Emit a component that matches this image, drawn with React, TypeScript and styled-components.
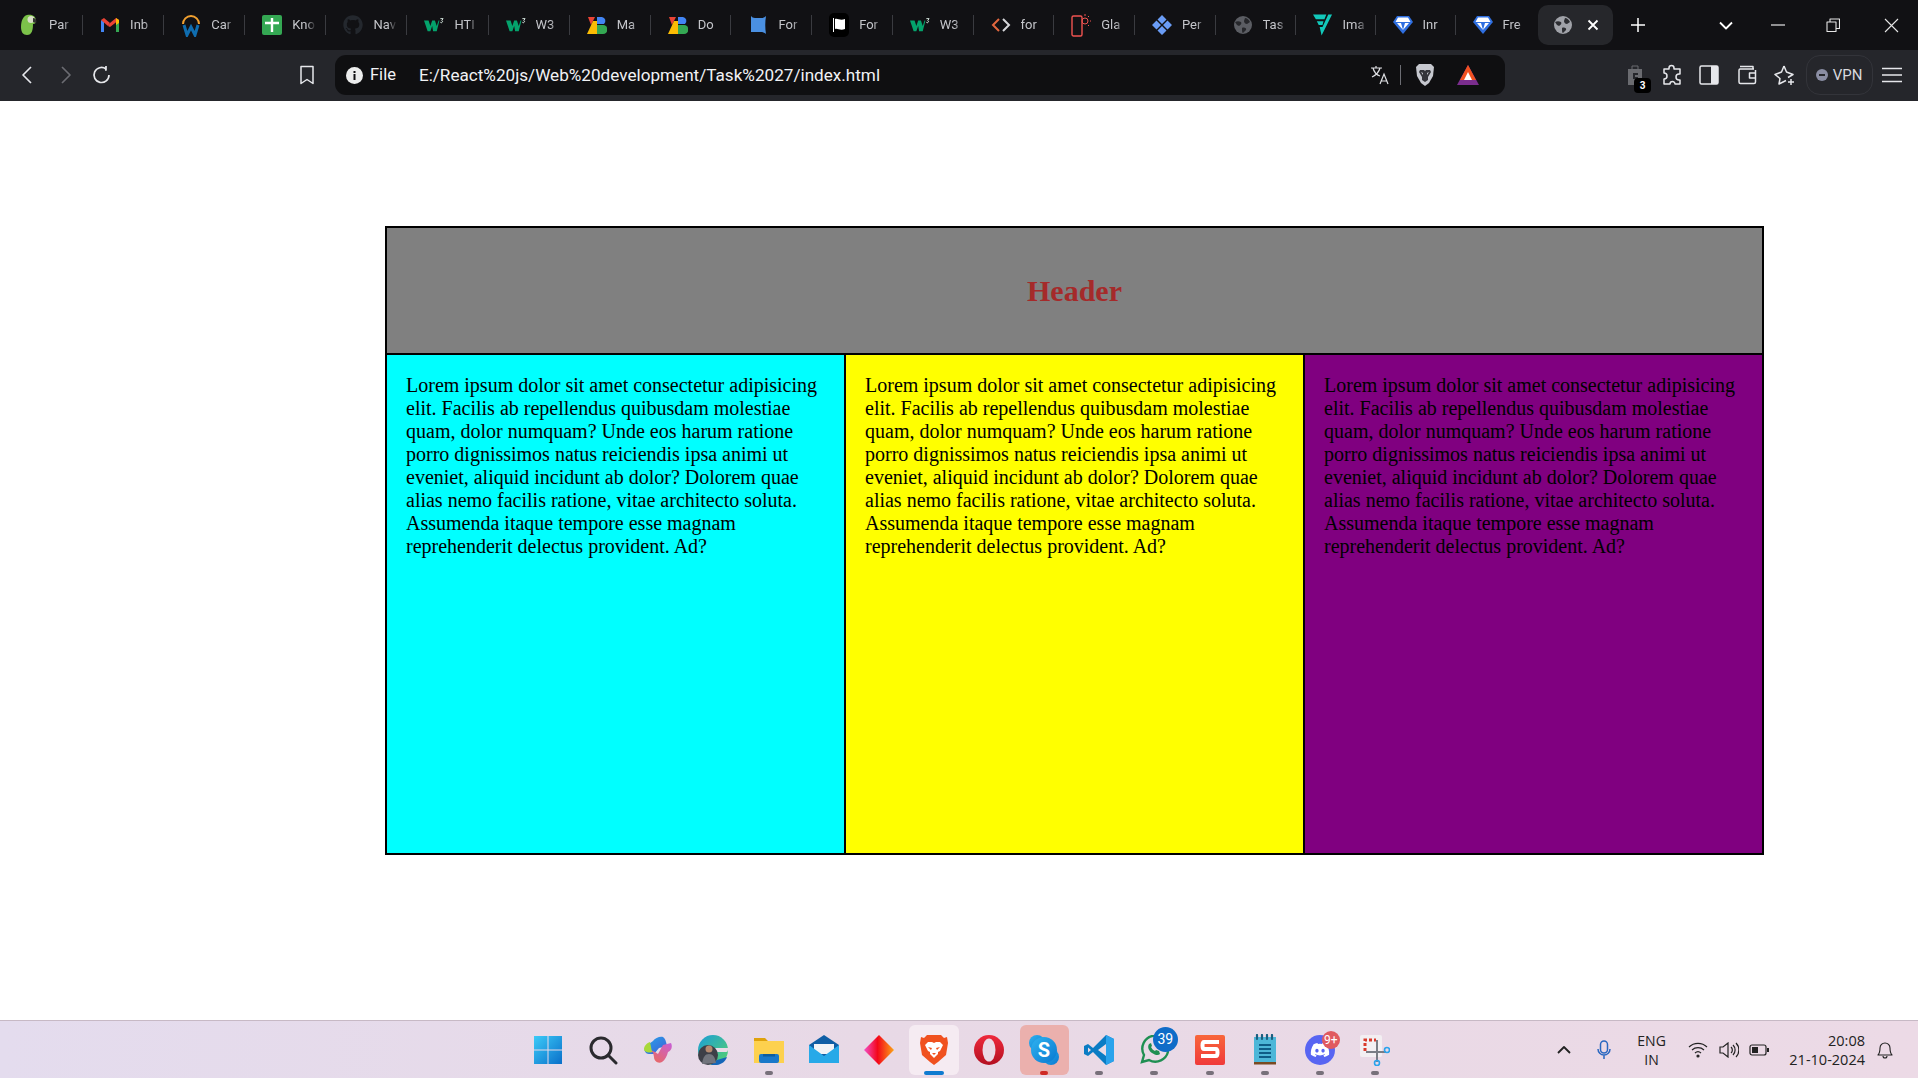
import React from "react";
import styled, { createGlobalStyle } from "styled-components";
import { FaGithub, FaDiscord } from "react-icons/fa";

const Global = createGlobalStyle`
  html, body { margin: 0; padding: 0; background: #fff; }
  body { width: 1918px; height: 1078px; overflow: hidden; font-family: "Liberation Serif", serif; }
`;

const Screen = styled.div`
  width: 1918px; height: 1078px; display: flex; flex-direction: column;
`;
const TabBar = styled.div`
  height: 50px; background: #111114; display: flex; align-items: center; padding-left: 2px; flex-shrink: 0;
`;
const Tab = styled.div<{ $w: number }>`
  width: ${(p) => p.$w}px; height: 20px; box-sizing: border-box; padding-left: 18px; display: flex; align-items: center; gap: 11px;
  border-right: 1px solid #3a3b40; flex-shrink: 0;
  &:nth-child(19) { border-right: none; }
`;
const FavSlot = styled.span`
  width: 20px; height: 20px; display: flex; align-items: center; justify-content: center; flex-shrink: 0; margin-left: -1px; margin-right: -1px;
`;
const TabLabel = styled.span`
  width: 24px; overflow: hidden; white-space: nowrap; color: #c4c5ca; font: 13px/20px Roboto, sans-serif;
  -webkit-mask-image: linear-gradient(90deg, #000 60%, transparent 100%);
  mask-image: linear-gradient(90deg, #000 60%, transparent 100%);
`;
const ActiveTab = styled.div`
  width: 75px; height: 40px; margin-left: 2.3px; background: #26272b; border-radius: 10px; display: flex; align-items: center;
  justify-content: space-between; padding: 0 14px 0 16px; box-sizing: border-box; flex-shrink: 0;
`;
const NewTab = styled.span`
  margin-left: 18px; display: flex;
`;
const WindowControls = styled.div`
  margin-left: auto; display: flex; align-items: center; padding-right: 19.5px;
`;
const ControlSlot = styled.span<{ $ml: number }>`
  margin-left: ${(p) => p.$ml}px; display: flex;
`;
const ToolBar = styled.div`
  height: 51px; background: #25262b; display: flex; align-items: center; flex-shrink: 0; padding-bottom: 1px; box-sizing: border-box; position: relative;
`;
const NavGroup = styled.div`
  display: flex; align-items: center; width: 335px; padding-left: 18px; box-sizing: border-box; gap: 17px;
`;
const NavSpacer = styled.span`
  margin-left: auto; margin-right: 20px; display: flex;
`;
const AddressBar = styled.div`
  width: 1170px; height: 40px; background: #0f0f11; border-radius: 11px; display: flex; align-items: center; box-sizing: border-box; padding: 0 26px 0 11px;
`;
const FileChip = styled.span`
  color: #f1f2f5; font: 16.5px/20px Roboto, sans-serif; margin-left: 7px; margin-right: 23px;
`;
const Url = styled.span`
  color: #f1f2f5; font: 17.14px/20px Roboto, sans-serif; white-space: nowrap; flex: 1;
`;
const Divider = styled.span`
  width: 1px; height: 20px; background: #6c6d73; margin: 0 14px 0 10px;
`;
const AddrIcons = styled.div`
  display: flex; align-items: center;
`;
const BatSlot = styled.span`
  margin-left: 22px; display: flex;
`;
const ToolRight = styled.div`
  margin-left: auto; display: flex; align-items: center; padding-right: 16px; gap: 9.5px;
`;
const ExtGroup = styled.div`
  display: flex; align-items: center; gap: 17.5px;
`;
const ExtSlot = styled.span`
  position: relative; display: flex; margin-right: 1px;
`;
const ExtBadge = styled.span`
  position: absolute; right: -8px; bottom: -7px; width: 17px; height: 15px; border-radius: 4px; background: #000; color: #fff;
  font: 700 10px/15px Roboto, sans-serif; text-align: center;
`;
const VpnPill = styled.div`
  width: 67px; height: 40px; box-sizing: border-box; border: 1px solid #33343a; border-radius: 14px; display: flex; align-items: center; justify-content: center; gap: 5px;
  color: #d8d9de; font: 15px/20px Roboto, sans-serif;
`;
const VpnDot = styled.span`
  width: 12px; height: 12px; border-radius: 50%; background: #8a8da3; display: flex; align-items: center; justify-content: center;
  &::after { content: ""; width: 6px; height: 2px; background: #25262b; }
`;
const Main = styled.main`
  flex: 1; background: #fff; padding: 125px 154px 0 385px; box-sizing: border-box; min-height: 0;
`;
const PageGrid = styled.section`
  height: 629px; box-sizing: border-box; border: 2px solid #000; background: #000; display: grid;
  grid-template-columns: repeat(3, 1fr); grid-template-rows: 125px 1fr; gap: 2px;
`;
const PageHeader = styled.header`
  grid-column: 1 / -1; background: gray; display: flex; align-items: center; justify-content: center;
`;
const Title = styled.h1`
  margin: 0; color: brown; font: 700 30px/34px "Liberation Serif", serif;
`;
const Column = styled.article<{ $bg: string }>`
  background: ${(p) => p.$bg}; padding: 19px; box-sizing: border-box;
`;
const Copy = styled.p`
  margin: 0; color: #000; font: 20px/23px "Liberation Serif", serif;
`;
const Taskbar = styled.footer`
  height: 58px; box-sizing: border-box; border-top: 1px solid #c7b9c5; flex-shrink: 0; padding-left: 5px;
  background: linear-gradient(90deg, #e4dcee 0%, #e8d9e6 45%, #ecdae6 100%);
  display: grid; grid-template-columns: 1fr auto 1fr; align-items: center;
`;
const TaskCenter = styled.div`
  grid-column: 2; display: flex; align-items: center; height: 100%;
`;
const TaskItem = styled.div<{ $bg?: string }>`
  width: 55.13px; height: 50px; display: flex; align-items: center; justify-content: center; position: relative; flex-shrink: 0;
  &::before {
    content: ""; position: absolute; top: 0; bottom: 0; left: 3px; right: 3px; border-radius: 6px; background: ${(p) => p.$bg || "transparent"};
  }
  & > svg { position: relative; }
`;
const TaskDot = styled.span<{ $color: string; $w: number }>`
  position: absolute; bottom: 0; left: 50%; margin-left: ${(p) => -p.$w / 2}px; width: ${(p) => p.$w}px; height: 4px; border-radius: 2px; background: ${(p) => p.$color};
`;
const CountBadge = styled.span<{ $bg: string; $size: number; $font: number }>`
  position: absolute; top: ${(p) => 15 - p.$size / 2}px; left: ${(p) => 38.5 - p.$size / 2}px; width: ${(p) => p.$size}px; height: ${(p) => p.$size}px;
  border-radius: 50%; background: ${(p) => p.$bg}; color: #fff;
  font: ${(p) => p.$font}px/${(p) => p.$size}px Roboto, sans-serif; text-align: center;
`;
const Tray = styled.div`
  grid-column: 3; justify-self: end; display: flex; align-items: center; height: 100%; padding-right: 25px; color: #222;
`;
const TraySlot = styled.span<{ $ml: number }>`
  margin-left: ${(p) => p.$ml}px; display: flex;
`;
const TrayText = styled.div<{ $align: string; $ml: number; $size: number }>`
  margin-left: ${(p) => p.$ml}px; text-align: ${(p) => p.$align}; font: ${(p) => p.$size}px/19px "Open Sans", sans-serif; color: #222;
`;

/* ---- favicons ---- */
const Parrot = () => (
  <svg width="18" height="22" viewBox="0 0 18 22"><path d="M7 1c5-1 9 1 9 6 0 2-1 3-3 3 0 6-1 11-6 11-4 0-6-3-6-8C1 7 3 2 7 1z" fill="#7cc24a" /><circle cx="11" cy="5.500" r="3.500" fill="#d9dfc8" /><path d="M13 4c3 0 4 3 3 5l-3-1z" fill="#333" /></svg>
);
const Gmail = () => (
  <svg width="20" height="16" viewBox="0 0 20 16"><path d="M1 15V3l3 2v10z" fill="#4285f4" /><path d="M19 15V3l-3 2v10z" fill="#34a853" /><path d="M1 3 4 1l6 5-2 3z" fill="#ea4335" /><path d="M10 6l6-5 3 2-9 7-2-1z" fill="#ea4335" /><path d="M16 1l3 2v3l-3 2z" fill="#fbbc04" /></svg>
);
const Workday = () => (
  <svg width="20" height="24" viewBox="0 0 20 24"><path d="M2 11a8 8 0 0 1 16 0" fill="none" stroke="#f0a030" strokeWidth="2" /><path d="M3 12l3 10 4-8 4 8 3-10" fill="none" stroke="#0f6db0" strokeWidth="3" /></svg>
);
const PlusSquare = () => (
  <svg width="20" height="20" viewBox="0 0 20 20"><rect width="20" height="20" rx="2" fill="#34a853" /><path d="M10 3v14M3 8h14" stroke="#fff" strokeWidth="2.400" /></svg>
);
const W3 = () => (
  <svg width="22" height="16" viewBox="0 0 22 16"><path d="M0 3h5l2 6 2-6h3l2 6 2-6h1l-3 12h-4L9 9l-2 6H4z" fill="#04a36c" /><path d="M18 1h3l-1.400 2a1.300 1.300 0 1 1-1.600 2" fill="none" stroke="#e7f7ef" strokeWidth="1" /></svg>
);
const SevenB = () => (
  <svg width="20" height="19" viewBox="0 0 20 19"><path d="M1 1h7L4 9z" fill="#ea4335" /><path d="M6 5h4v13H0z" fill="#fbbc04" /><path d="M10 1h5a4 4 0 0 1 2 7h-7z" fill="#4285f4" /><path d="M10 9h6a4.500 4.500 0 0 1 0 9h-6z" fill="#34a853" /></svg>
);
const Banner = () => (
  <svg width="17" height="20" viewBox="0 0 17 20"><path d="M1 1c1 1 2 2 4 2h7c1 0 3-1 4-2-1 6-1 12 0 18-1-1-3-2-4-2H1z" fill="#4a90e2" /></svg>
);
const FlagBox = () => (
  <svg width="20" height="24" viewBox="0 0 20 24"><rect width="20" height="24" rx="5" fill="#000" /><path d="M4 5h1v14H4zM6 6c3-1 5 2 10 0v10c-5 2-7-1-10 0z" fill="#fff" /></svg>
);
const Code = () => (
  <svg width="20" height="14" viewBox="0 0 20 14"><path d="M8 1 2 7l6 6" fill="none" stroke="#e2673f" strokeWidth="2" /><path d="m12 1 6 6-6 6" fill="none" stroke="#d6d7da" strokeWidth="2" /></svg>
);
const Phone = () => (
  <svg width="20" height="24" viewBox="0 0 20 24"><rect x="1" y="3" width="10" height="20" rx="1.500" fill="none" stroke="#ef5350" strokeWidth="1.400" /><circle cx="14" cy="8" r="3" fill="none" stroke="#ef5350" /><path d="M14 1v2M19 8h1M18 3l-1 1M18 13l-1-1" stroke="#ef5350" /></svg>
);
const Diamonds = () => (
  <svg width="20" height="20" viewBox="0 0 20 20" fill="#6a9cf5"><path d="m10 0 4.500 4.500L10 9 5.500 4.500zM4.500 5.500 9 10l-4.500 4.500L0 10zM15.500 5.500 20 10l-4.500 4.500L11 10zM10 11l4.500 4.500L10 20l-4.500-4.500z" /></svg>
);
const Globe = ({ c = "#5b5d63", d = "#26272b", s = 18 }: { c?: string; d?: string; s?: number }) => (
  <svg width={s} height={s} viewBox="0 0 18 18"><circle cx="9" cy="9" r="9" fill={c} /><path d="M1 6c2-1 4-1 6 0 1 1 0 3-2 4L3 9zM11 2c2 0 4 2 5 4l-3 2c-2 0-3-2-3-3zM8 12c2-1 5 0 4 2l-3 3c-1 0-1-3-1-5z" fill={d} /></svg>
);
const FV = () => (
  <svg width="21" height="24" viewBox="0 0 21 24"><path d="M0 1h14l-2 5H3zM4 8h7l-1 4H6zM7 14l2 9L20 1h-4l-6 13z" fill="#12c9bb" /></svg>
);
const Gem = () => (
  <svg width="20" height="18" viewBox="0 0 20 18"><path d="M4 0h12l4 6-10 12L0 6z" fill="#2f6fe0" /><path d="M5 1.500h10L17.500 6H2.500zM4 7h4l2 7zM16 7h-4l-2 7z" fill="#fff" /></svg>
);

const tabs: [React.ReactNode, string][] = [
  [<Parrot />, "Par"], [<Gmail />, "Inb"], [<Workday />, "Car"], [<PlusSquare />, "Kno"],
  [<FaGithub size={20} color="#24282e" />, "Nav"], [<W3 />, "HTI"], [<W3 />, "W3"], [<SevenB />, "Ma"],
  [<SevenB />, "Do"], [<Banner />, "For"], [<FlagBox />, "For"], [<W3 />, "W3"], [<Code />, "for"],
  [<Phone />, "Gla"], [<Diamonds />, "Per"], [<Globe />, "Tas"], [<FV />, "Ima"], [<Gem />, "Inr"], [<Gem />, "Fre"],
];
const tabWidth = (i: number) => (i < 8 ? 81.1 : i < 15 ? 80.7 : 80);

/* ---- chrome glyphs ---- */
const Stroke = ({ w = 18, h = 18, c = "#e4e5e9", sw = 1.5, d }: { w?: number; h?: number; c?: string; sw?: number; d: string }) => (
  <svg width={w} height={h} viewBox={`0 0 ${w} ${h}`} fill="none" stroke={c} strokeWidth={sw} strokeLinejoin="round"><path d={d} /></svg>
);

/* ---- taskbar icons ---- */
const StartIcon = () => (
  <svg width="30" height="30" viewBox="0 0 30 30"><defs><linearGradient id="st" x1="0" y1="0" x2="1" y2="1"><stop offset="0" stopColor="#3ccbf8" /><stop offset="1" stopColor="#0a6fc9" /></linearGradient></defs><path d="M1 1h13.500v13.500H1zM15.500 1H29v13.500H15.500zM1 15.500h13.500V29H1zM15.500 15.500H29V29H15.500z" fill="url(#st)" /></svg>
);
const SearchIcon = () => (
  <svg width="30" height="30" viewBox="0 0 30 30" fill="none" stroke="#2a2a2e" strokeWidth="3"><circle cx="13" cy="13" r="10" /><path d="m20 20 8 8" strokeLinecap="round" /></svg>
);
const CopilotIcon = () => (
  <svg width="30" height="30" viewBox="0 0 30 30"><defs><linearGradient id="c1" x1="0" y1="0" x2="1" y2="1"><stop offset="0" stopColor="#2aa5e8" /><stop offset="1" stopColor="#3b5fd8" /></linearGradient><linearGradient id="c2" x1="0" y1="1" x2="1" y2="0"><stop offset="0" stopColor="#f06a4a" /><stop offset="1" stopColor="#c75fd8" /></linearGradient></defs><path d="M10 6c2-3 7-5 10-4 2 1 3 4 4 9l-8 2-5 6H6C2 19 0 14 3 11z" fill="url(#c1)" /><path d="M3 13c1 4 4 5 7 4l1 5c0 4 4 7 8 5 3-2 5-6 6-10 3-1 5-5 3-9l-8 2-5 9-3-2z" fill="url(#c2)" /><path d="M1 14c0-3 3-6 6-7l2 10c-4 1-8 0-8-3z" fill="#a8d83a" /></svg>
);
const EdgeIcon = () => (
  <svg width="30" height="30" viewBox="0 0 30 30"><defs><linearGradient id="e1" x1="0" y1="0" x2="1" y2="1"><stop offset="0" stopColor="#1a9dd8" /><stop offset="1" stopColor="#58d36a" /></linearGradient></defs><circle cx="15" cy="15" r="15" fill="url(#e1)" /><path d="M14 13h16c0 2 0 4-2 4h-9c-2 0-4-2-5-4z" fill="#e8dbe6" /><path d="M13 30c8 1 14-2 16-8l-10 3c-3 1-5 3-6 5z" fill="#1466b8" /><circle cx="10" cy="20" r="10" fill="#3d3f47" /><circle cx="11" cy="14" r="3.500" fill="#b58a70" /><path d="M4 29c1-7 3-10 7-10s6 3 7 9z" fill="#71747c" /></svg>
);
const ExplorerIcon = () => (
  <svg width="30" height="30" viewBox="0 0 30 30"><path d="M0 3h11l3 3h16v8H0z" fill="#dfa20c" /><path d="M0 6h30v22H0z" fill="#fdd14e" /><rect x="5" y="19" width="20" height="9" rx="2" fill="#1a78c9" /><rect x="9" y="19" width="12" height="2.500" fill="#0f5d9f" /></svg>
);
const MailIcon = () => (
  <svg width="30" height="30" viewBox="0 0 30 30"><path d="M0 10 15 0l15 10v18H0z" fill="#0f5ea5" /><path d="M5 9h20v10H5z" fill="#f1f3f6" /><path d="M0 10l15 11 15-11v18H0z" fill="#27a9e8" /></svg>
);
const DiamondIcon = () => (
  <svg width="30" height="30" viewBox="0 0 30 30"><defs><linearGradient id="d1" x1="0" y1="0" x2="1" y2="0"><stop offset="0" stopColor="#f450c8" /><stop offset=".45" stopColor="#f3071a" /><stop offset="1" stopColor="#fca516" /></linearGradient></defs><path d="M15 0l15 15-15 15L0 15z" fill="url(#d1)" /></svg>
);
const BraveIcon = () => (
  <svg width="28" height="32" viewBox="0 0 28 32"><path d="M7 1h14l3 3 3-1 1 6-2 12-8 7-4 3-4-3-8-7L0 9l1-6 3 1z" fill="#f0511f" /><path d="M8 8h4l2 1 2-1h4l3 3-3 6-2 1v2l-4 4-4-4v-2l-2-1-3-6z" fill="#fff" /><path d="M8 13l4 1-1 2zM20 13l-4 1 1 2zM12 19h4l-2 2z" fill="#f0511f" /></svg>
);
const OperaIcon = () => (
  <svg width="30" height="30" viewBox="0 0 30 30"><defs><linearGradient id="op" x1="0" y1="0" x2="0" y2="1"><stop offset="0" stopColor="#ef2a3c" /><stop offset="1" stopColor="#b30f20" /></linearGradient></defs><ellipse cx="15" cy="15" rx="15" ry="15" fill="url(#op)" /><ellipse cx="15" cy="15" rx="6.500" ry="11.500" fill="#eadae6" /></svg>
);
const SkypeIcon = () => (
  <svg width="30" height="30" viewBox="0 0 30 30"><defs><linearGradient id="sk" x1="0" y1="0" x2="1" y2="1"><stop offset="0" stopColor="#2fb3f0" /><stop offset="1" stopColor="#0a78d0" /></linearGradient></defs><circle cx="8" cy="8" r="8" fill="url(#sk)" /><circle cx="22" cy="22" r="8" fill="url(#sk)" /><circle cx="15" cy="15" r="13" fill="url(#sk)" /><text x="15" y="22" textAnchor="middle" fontFamily="Roboto, sans-serif" fontSize="20" fontWeight="700" fill="#fff">S</text></svg>
);
const VsIcon = () => (
  <svg width="30" height="30" viewBox="0 0 30 30"><path d="M22 0l8 4v22l-8 4L9 17l-5 4-4-2V11l4-2 5 4z" fill="#0a7cc4" /><path d="M22 0l8 4v22l-8 4z" fill="#2aa3ec" /><path d="M4 12.500v5l3-2.500zM22 9l-8 6 8 6z" fill="#e8dbe6" /></svg>
);
const WaIcon = () => (
  <svg width="30" height="30" viewBox="0 0 30 30" fill="none"><path d="M3 27l2-7A13 13 0 1 1 10 25z" stroke="#1f8f52" strokeWidth="2.400" /><path d="M10 9c-2 3 0 7 3 9s6 3 8 1l-1-3-3-1-1 1c-2-1-3-2-4-4l1-1-1-3z" fill="#1f8f52" /></svg>
);
const SublimeIcon = () => (
  <svg width="30" height="30" viewBox="0 0 30 30"><defs><linearGradient id="sb" x1="0" y1="0" x2="0" y2="1"><stop offset="0" stopColor="#f8663a" /><stop offset="1" stopColor="#f03a3a" /></linearGradient></defs><rect width="30" height="30" rx="2" fill="url(#sb)" /><path d="M24 7H9c-2 0-2 7 0 7h12c2 0 2 7 0 7H6" fill="none" stroke="#fff" strokeWidth="4" /></svg>
);
const NotepadIcon = () => (
  <svg width="24" height="32" viewBox="0 0 24 32"><rect x="1" y="3" width="22" height="26" fill="#4db7d8" /><rect x="1" y="28" width="22" height="2.500" fill="#7a4a22" /><path d="M6 11h12M6 15h12M6 19h12M6 23h12" stroke="#0f5d87" strokeWidth="1.800" /><path d="M4 1v4M9 1v4M14 1v4M19 1v4" stroke="#1a5f80" strokeWidth="2.200" strokeLinecap="round" /></svg>
);
const SnipIcon = () => (
  <svg width="30" height="32" viewBox="0 0 30 32" fill="none"><rect x="0" y="1" width="22" height="22" rx="2" fill="#f3eff2" /><path d="M5 17V6h11" stroke="#d93a2b" strokeWidth="3" strokeDasharray="3 2" /><path d="M17 6v22M6 18h20" stroke="#7a7d85" strokeWidth="2" /><circle cx="27" cy="16" r="2.500" stroke="#2aa3ec" strokeWidth="1.600" /><circle cx="17" cy="29" r="2.500" stroke="#2aa3ec" strokeWidth="1.600" /></svg>
);

const lorem =
  "Lorem ipsum dolor sit amet consectetur adipisicing elit. Facilis ab repellendus quibusdam molestiae quam, dolor numquam? Unde eos harum ratione porro dignissimos natus reiciendis ipsa animi ut eveniet, aliquid incidunt ab dolor? Dolorem quae alias nemo facilis ratione, vitae architecto soluta. Assumenda itaque tempore esse magnam reprehenderit delectus provident. Ad?";

export default function App() {
  return (
    <Screen>
      <Global />
      <TabBar>
        {tabs.map(([icon, label], i) => (
          <Tab key={i} $w={tabWidth(i)}>
            <FavSlot>{icon}</FavSlot>
            <TabLabel>{label}</TabLabel>
          </Tab>
        ))}
        <ActiveTab>
          <Globe c="#a0a2a8" d="#2c2d31" s={18} />
          <Stroke w={12} h={12} c="#fff" sw={1.8} d="M1.500 1.500l9 9M10.500 1.500l-9 9" />
        </ActiveTab>
        <NewTab>
          <Stroke w={14} h={14} c="#fff" sw={1.5} d="M7 0v14M0 7h14" />
        </NewTab>
        <WindowControls>
          <Stroke w={14} h={9} c="#fff" sw={1.8} d="M1 1.500l6 6 6-6" />
          <ControlSlot $ml={37.6}><Stroke w={14} h={2} c="#e6e6e6" sw={1.2} d="M0 1h14" /></ControlSlot>
          <ControlSlot $ml={41.4}><Stroke w={14} h={14} c="#e6e6e6" sw={1.1} d="M1 4h9v9.500H1zM4 4V1h9.500v9.500H10" /></ControlSlot>
          <ControlSlot $ml={43.5}><Stroke w={15} h={15} c="#e6e6e6" sw={1.1} d="M1 1l13 13M14 1L1 14" /></ControlSlot>
        </WindowControls>
      </TabBar>

      <ToolBar>
        <NavGroup>
          <Stroke w={20} h={20} c="#e6e7eb" sw={1.7} d="M13 2 5 10l8 8" />
          <Stroke w={20} h={20} c="#6b6c72" sw={1.7} d="M7 2l8 8-8 8" />
          <Stroke w={20} h={20} c="#e6e7eb" sw={1.7} d="M17 10a7.500 7.500 0 1 1-3-6M14 1v4h-1" />
          <NavSpacer>
            <Stroke w={16} h={20} c="#e6e7eb" sw={1.5} d="M2 1.500h12v17l-6-4-6 4z" />
          </NavSpacer>
        </NavGroup>
        <AddressBar>
          <svg width="17" height="17" viewBox="0 0 17 17"><circle cx="8.500" cy="8.500" r="8.500" fill="#eceded" /><rect x="7.500" y="7" width="2" height="6" fill="#0f0f11" /><rect x="7.500" y="4" width="2" height="2" fill="#0f0f11" /></svg>
          <FileChip>File</FileChip>
          <Url>E:/React%20js/Web%20development/Task%2027/index.html</Url>
          <AddrIcons>
            <svg width="20" height="20" viewBox="0 0 20 20" fill="none" stroke="#dfe0e4" strokeWidth="1.200"><path d="M1 3h11M6 1v2M3 3c1 4 4 7 7 8M10 3c-1 4-4 7-8 9" /><path d="M10 19l4-10 4 10M11.500 16h5" /></svg>
            <Divider />
            <svg width="20" height="24" viewBox="0 0 20 24"><path d="M4 1h12l3 3-1 9-4 7-4 3-4-3-4-7-1-9z" fill="#c6c8cf" /><path d="M5 7h4l1 1 1-1h4l1 2-3 5v3l-3 2-3-2v-3L4 9z" fill="#33343a" /><path d="M6 9l2 1v2zM14 9l-2 1v2z" fill="#c6c8cf" /></svg>
            <BatSlot>
              <svg width="22" height="20" viewBox="0 0 22 20"><path d="M11 0l11 20H0z" fill="#7b2d8e" /><path d="M11 0l8 15H3z" fill="#f0511f" /><path d="M11 7l4 8H7z" fill="#fff" /></svg>
            </BatSlot>
          </AddrIcons>
        </AddressBar>
        <ToolRight>
          <ExtGroup>
            <ExtSlot>
              <svg width="16" height="22" viewBox="0 0 16 22"><path d="M1 5h14v16H1z" fill="#6a6b70" /><path d="M5 5V2h6v3" stroke="#6a6b70" fill="none" /><path d="M6 9h5v2H8v2h3v2H6z" fill="#25262b" /></svg>
              <ExtBadge>3</ExtBadge>
            </ExtSlot>
            <Stroke w={20} h={22} c="#e6e7eb" sw={1.5} d="M7 4a2.500 2.500 0 1 1 5 0v1h6v5h-1a2.500 2.500 0 1 0 0 6h1v4h-5a2.500 2.500 0 1 0-5 0H2v-5a2.500 2.500 0 1 0 0-6V5h5z" />
            <svg width="20" height="20" viewBox="0 0 20 20"><rect x="1" y="1" width="18" height="18" rx="1.500" fill="none" stroke="#e6e7eb" strokeWidth="1.500" /><rect x="12" y="1" width="7" height="18" fill="#e6e7eb" /></svg>
            <Stroke w={20} h={20} c="#e6e7eb" sw={1.5} d="M17 4H3a1.500 1.500 0 0 0-1 1.500V17a1.500 1.500 0 0 0 1.500 1.500H17a1.500 1.500 0 0 0 1.500-1.500V5M18.500 8h-6v5h6M3 1.500h13V4" />
            <Stroke w={22} h={22} c="#e6e7eb" sw={1.5} d="M10 2l2.500 6L19 10.500l-5 3M10 2 7.500 8 1 10.500l5 4-1 5.500 7-3.500M17 15v6M14 18h6" />
          </ExtGroup>
          <VpnPill>
            <VpnDot />
            VPN
          </VpnPill>
          <Stroke w={20} h={16} c="#e6e7eb" sw={1.4} d="M0 1.500h20M0 8h20M0 14.500h20" />
        </ToolRight>
      </ToolBar>

      <Main>
        <PageGrid>
          <PageHeader>
            <Title>Header</Title>
          </PageHeader>
          <Column $bg="aqua"><Copy>{lorem}</Copy></Column>
          <Column $bg="yellow"><Copy>{lorem}</Copy></Column>
          <Column $bg="purple"><Copy>{lorem}</Copy></Column>
        </PageGrid>
      </Main>

      <Taskbar>
        <TaskCenter>
          <TaskItem><StartIcon /></TaskItem>
          <TaskItem><SearchIcon /></TaskItem>
          <TaskItem><CopilotIcon /></TaskItem>
          <TaskItem><EdgeIcon /></TaskItem>
          <TaskItem><ExplorerIcon /><TaskDot $color="#77707a" $w={8} /></TaskItem>
          <TaskItem><MailIcon /></TaskItem>
          <TaskItem><DiamondIcon /></TaskItem>
          <TaskItem $bg="#f5ebf2"><BraveIcon /><TaskDot $color="#0f7bd0" $w={20} /></TaskItem>
          <TaskItem><OperaIcon /></TaskItem>
          <TaskItem $bg="#ebb0ad"><SkypeIcon /><TaskDot $color="#cf2a25" $w={8} /></TaskItem>
          <TaskItem><VsIcon /><TaskDot $color="#77707a" $w={8} /></TaskItem>
          <TaskItem><WaIcon /><CountBadge $bg="#0f6cc8" $size={25} $font={14}>39</CountBadge><TaskDot $color="#77707a" $w={8} /></TaskItem>
          <TaskItem><SublimeIcon /><TaskDot $color="#77707a" $w={8} /></TaskItem>
          <TaskItem><NotepadIcon /><TaskDot $color="#77707a" $w={8} /></TaskItem>
          <TaskItem>
            <svg width="30" height="30" viewBox="0 0 30 30"><circle cx="15" cy="15" r="15" fill="#5865f2" /><foreignObject x="5" y="5" width="20" height="20"><FaDiscord size={20} color="#fff" /></foreignObject></svg>
            <CountBadge $bg="#e05a5f" $size={18} $font={12}>9+</CountBadge>
            <TaskDot $color="#77707a" $w={8} />
          </TaskItem>
          <TaskItem><SnipIcon /><TaskDot $color="#77707a" $w={8} /></TaskItem>
        </TaskCenter>
        <Tray>
          <Stroke w={14} h={9} c="#222" sw={1.8} d="M1 8l6-6 6 6" />
          <TraySlot $ml={25}>
            <svg width="16" height="20" viewBox="0 0 16 20" fill="none" stroke="#2a67c0" strokeWidth="1.500"><rect x="4.500" y="1" width="7" height="12" rx="3.500" /><path d="M2 9a6 6 0 0 0 12 0M8 15v4" /></svg>
          </TraySlot>
          <TrayText $align="center" $ml={25} $size={14}>ENG<br />IN</TrayText>
          <TraySlot $ml={22.5}>
            <svg width="20" height="16" viewBox="0 0 20 16" fill="none" stroke="#222" strokeWidth="1.200"><path d="M1 5a13 13 0 0 1 18 0M4 8a9 9 0 0 1 12 0M7 11a4.500 4.500 0 0 1 6 0" /><circle cx="10" cy="14" r="1" fill="#222" /></svg>
          </TraySlot>
          <TraySlot $ml={11}>
            <svg width="20" height="16" viewBox="0 0 20 16" fill="none" stroke="#222" strokeWidth="1.200"><path d="M1 5h3l5-4v14l-5-4H1zM12 5a4 4 0 0 1 0 6M14 3a7 7 0 0 1 0 10M17 1a10 10 0 0 1 0 14" /></svg>
          </TraySlot>
          <TraySlot $ml={10}>
            <svg width="20" height="12" viewBox="0 0 20 12"><rect x="1" y="1" width="16" height="10" rx="2" fill="none" stroke="#222" strokeWidth="1.200" /><rect x="3" y="3" width="6" height="6" fill="#222" /><rect x="18" y="4" width="2" height="4" fill="#222" /></svg>
          </TraySlot>
          <TrayText $align="right" $ml={20} $size={14.5}>20:08<br />21-10-2024</TrayText>
          <TraySlot $ml={12}>
            <Stroke w={16} h={18} c="#222" sw={1.1} d="M1 14c2-2 2-4 2-7a5 5 0 0 1 10 0c0 3 0 5 2 7zM6 15a2 2 0 0 0 4 0" />
          </TraySlot>
        </Tray>
      </Taskbar>
    </Screen>
  );
}
